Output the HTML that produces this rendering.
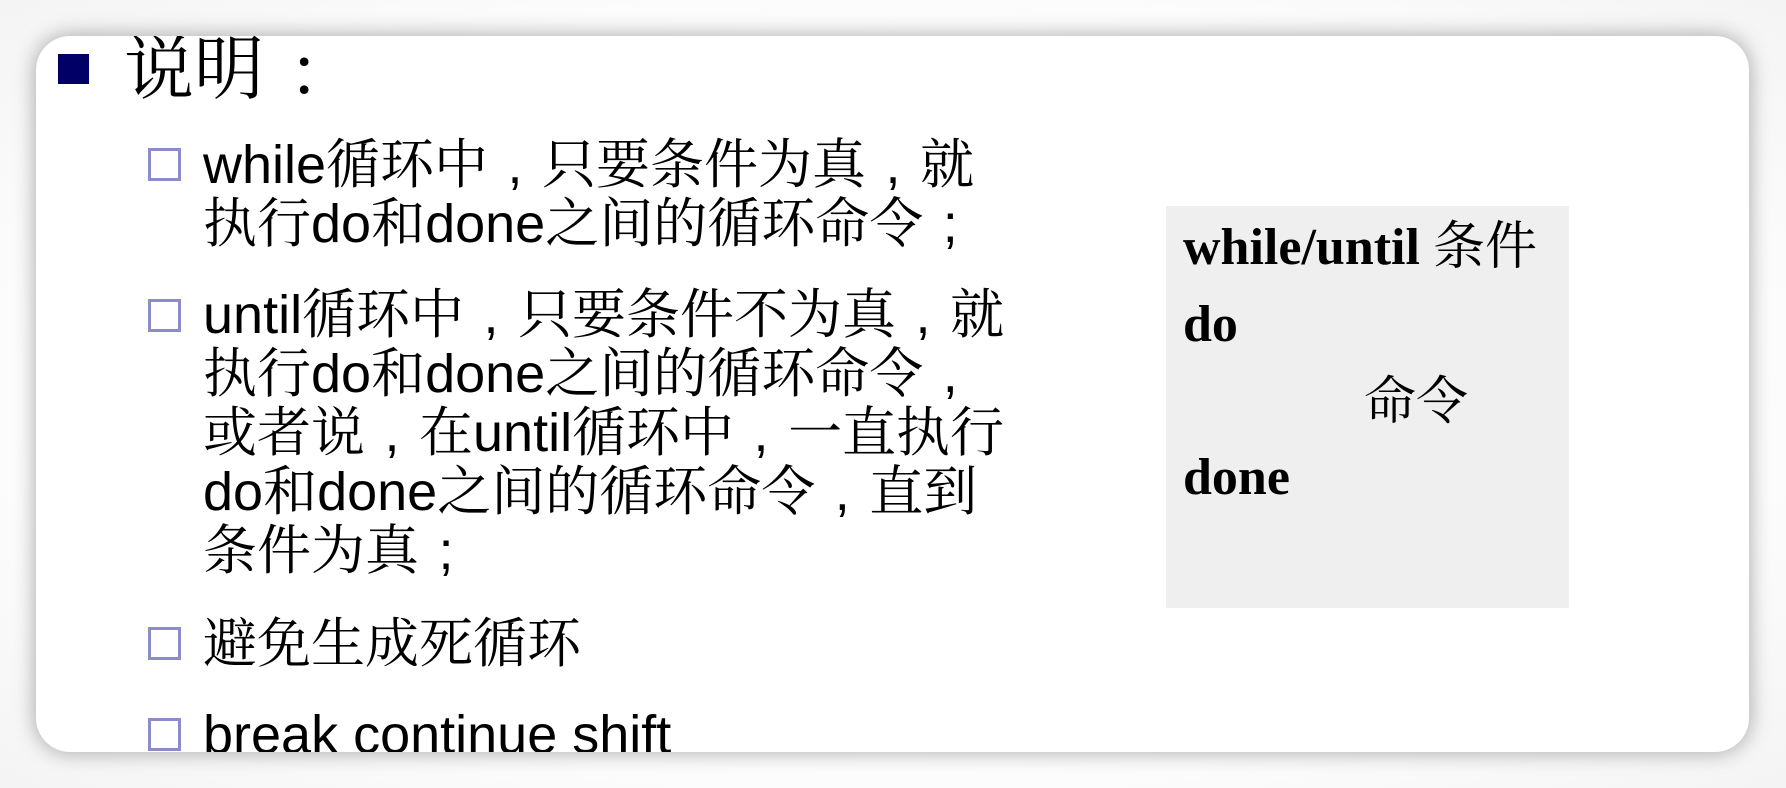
<!DOCTYPE html>
<html><head><meta charset="utf-8"><style>
html,body{margin:0;padding:0;background:#fff;width:1786px;height:788px;overflow:hidden;}
body{background:radial-gradient(ellipse at center,#fff 60%,#f4f4f4 100%);}
.card{position:absolute;left:36px;top:36px;width:1713px;height:716px;background:#fff;border-radius:34px;box-shadow:0 0 22px rgba(0,0,0,.35);overflow:hidden;}
.t{position:absolute;white-space:nowrap;color:#000;}
.h{font-family:"Noto Serif CJK SC","Liberation Serif",serif;font-size:70px;line-height:70px;}
.p{font-family:"Liberation Sans","Noto Serif CJK SC",sans-serif;font-size:54px;line-height:59px;left:167px;}
.c{display:inline-block;width:1em;text-align:center;}
.sq{position:absolute;left:112px;width:27px;height:27px;border:3px solid #8c8ccc;}
.box{position:absolute;left:1130px;top:170px;width:403px;height:402px;background:#efefef;}
.b{position:absolute;left:17px;font-family:"Liberation Serif","Noto Serif CJK SC",serif;font-size:52px;line-height:60px;white-space:nowrap;}
.b b{font-weight:bold;}
</style></head><body>
<div class="card">
  <div style="position:absolute;left:22px;top:18px;width:31px;height:30px;background:#000066;"></div>
  <div class="t h" style="left:88px;top:-7px;">说明<span class="c" style="width:1.15em">:</span></div>

  <div class="sq" style="top:112px;"></div>
  <div class="t p" style="top:100px;">while循环中<span class="c">,</span>只要条件为真<span class="c">,</span>就<br>执行do和done之间的循环命令<span class="c">;</span></div>

  <div class="sq" style="top:263px;"></div>
  <div class="t p" style="top:250px;">until循环中<span class="c">,</span>只要条件不为真<span class="c">,</span>就<br>执行do和done之间的循环命令<span class="c">,</span><br>或者说<span class="c">,</span>在until循环中<span class="c">,</span>一直执行<br>do和done之间的循环命令<span class="c">,</span>直到<br>条件为真<span class="c">;</span></div>

  <div class="sq" style="top:591px;"></div>
  <div class="t p" style="top:579px;">避免生成死循环</div>

  <div class="sq" style="top:682px;"></div>
  <div class="t p" style="top:670px;">break continue shift</div>

  <div class="box">
    <div class="b" style="top:12px;"><b>while/until</b> 条件</div>
    <div class="b" style="top:89px;"><b>do</b></div>
    <div class="b" style="top:167px;left:198px;">命令</div>
    <div class="b" style="top:242px;"><b>done</b></div>
  </div>
</div>
</body></html>
